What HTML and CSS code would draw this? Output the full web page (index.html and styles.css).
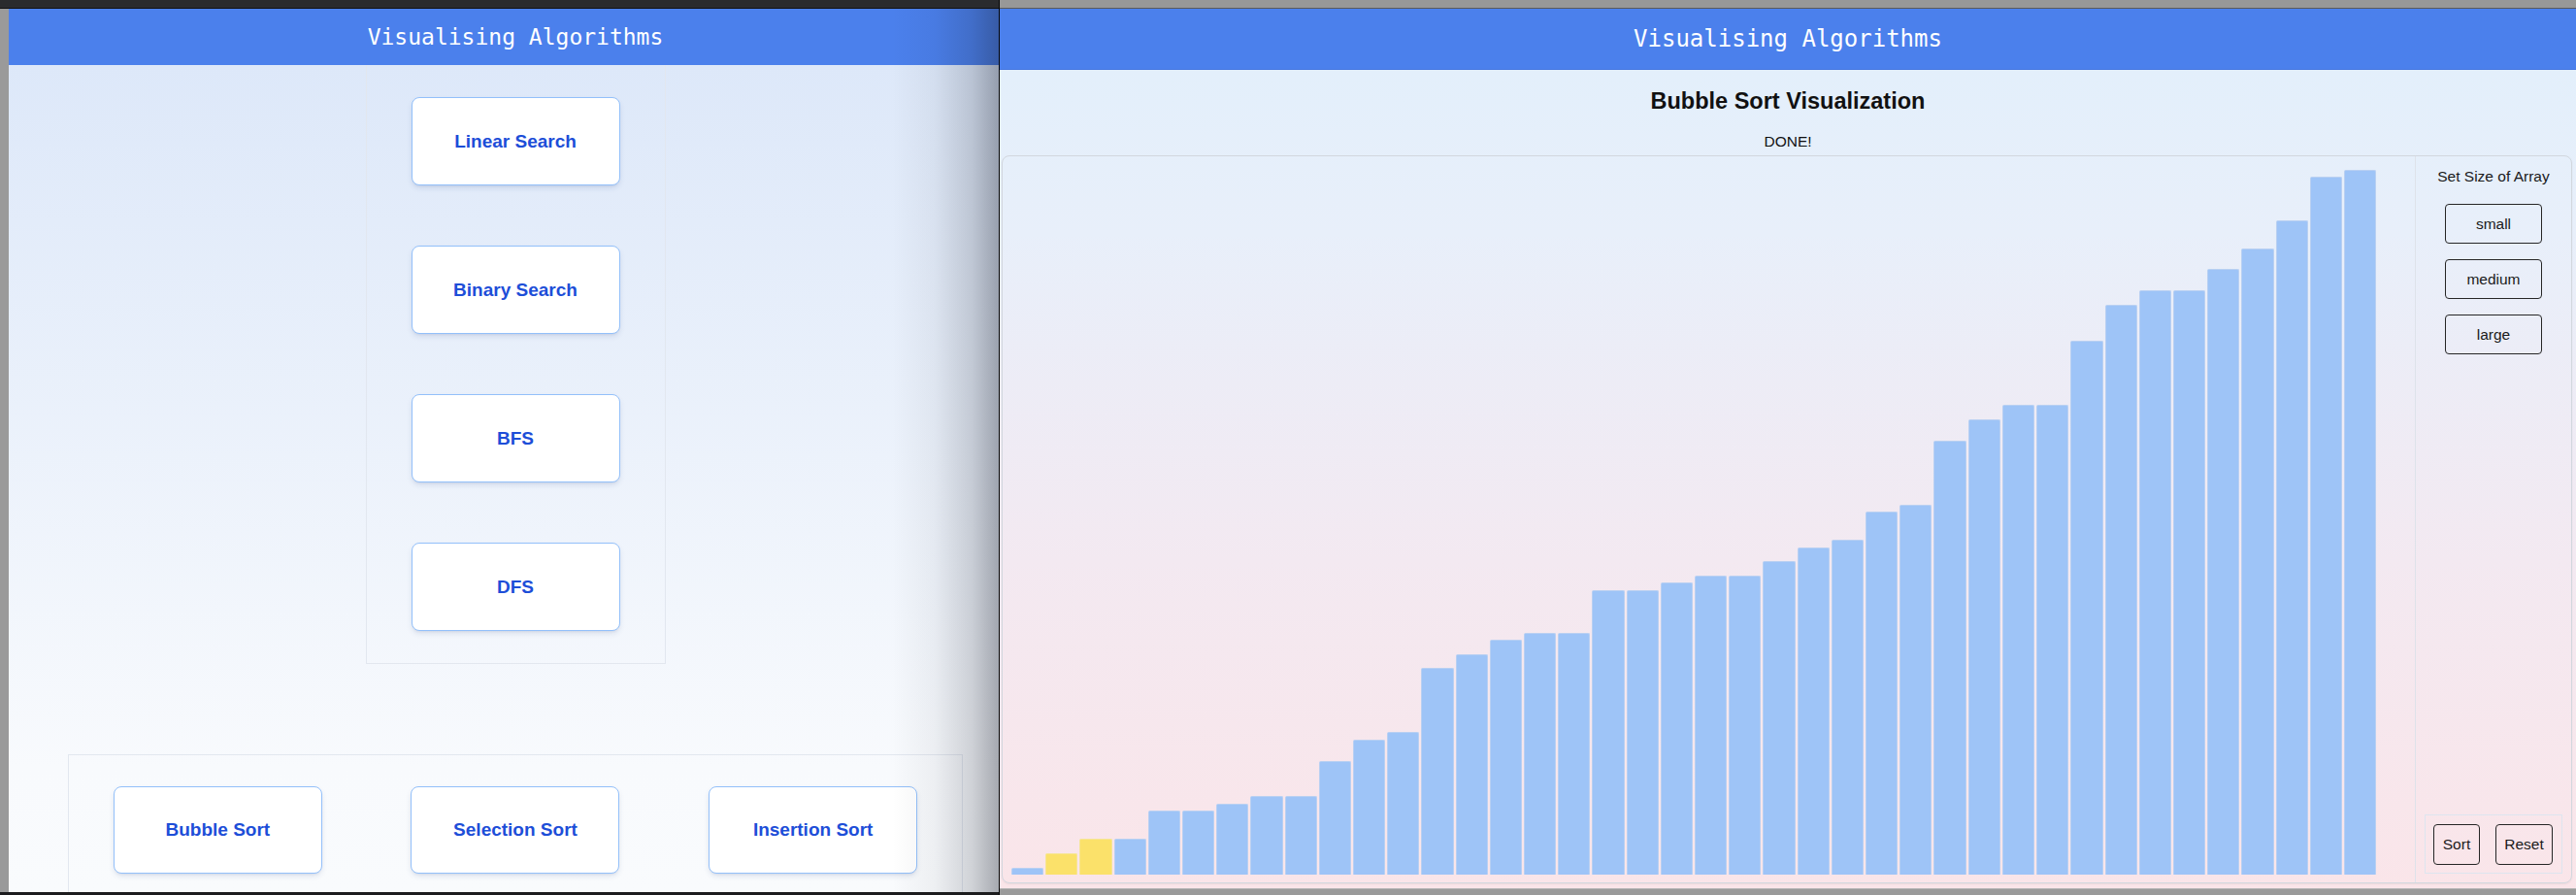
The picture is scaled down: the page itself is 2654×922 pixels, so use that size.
FILE: index.html
```html
<!DOCTYPE html>
<html lang="en">
<head>
<meta charset="utf-8">
<title>Visualising Algorithms</title>
<link rel="stylesheet" href="styles.css">
</head>
<body>
<div class="screen">
  <div class="win-left">
    <div class="topbar-dark"></div>
    <div class="left-body">
      <div class="edge-strip"></div>
      <div class="app-left">
        <header class="hdr hdr-left">Visualising Algorithms</header>
        <main class="menu">
          <div class="col-panel">
            <button class="algo-btn">Linear Search</button>
            <button class="algo-btn">Binary Search</button>
            <button class="algo-btn">BFS</button>
            <button class="algo-btn">DFS</button>
          </div>
          <div class="row-panel">
            <button class="algo-btn row-btn">Bubble Sort</button>
            <button class="algo-btn row-btn">Selection Sort</button>
            <button class="algo-btn row-btn">Insertion Sort</button>
          </div>
        </main>
      </div>
    </div>
    <div class="bottom-dark"></div>
    <div class="shade"></div>
  </div>
  <div class="win-right">
    <div class="topbar-grey"></div>
    <header class="hdr hdr-right">Visualising Algorithms</header>
    <div class="viz">
      <h2 class="viz-title">Bubble Sort Visualization</h2>
      <div class="status">DONE!</div>
      <div class="chart-panel">
        <div class="bars">
          <div class="bar" style="height:7px"></div>
          <div class="bar hl" style="height:22px"></div>
          <div class="bar hl" style="height:37px"></div>
          <div class="bar" style="height:37px"></div>
          <div class="bar" style="height:66px"></div>
          <div class="bar" style="height:66px"></div>
          <div class="bar" style="height:73px"></div>
          <div class="bar" style="height:81px"></div>
          <div class="bar" style="height:81px"></div>
          <div class="bar" style="height:117px"></div>
          <div class="bar" style="height:139px"></div>
          <div class="bar" style="height:147px"></div>
          <div class="bar" style="height:213px"></div>
          <div class="bar" style="height:227px"></div>
          <div class="bar" style="height:242px"></div>
          <div class="bar" style="height:249px"></div>
          <div class="bar" style="height:249px"></div>
          <div class="bar" style="height:293px"></div>
          <div class="bar" style="height:293px"></div>
          <div class="bar" style="height:301px"></div>
          <div class="bar" style="height:308px"></div>
          <div class="bar" style="height:308px"></div>
          <div class="bar" style="height:323px"></div>
          <div class="bar" style="height:337px"></div>
          <div class="bar" style="height:345px"></div>
          <div class="bar" style="height:374px"></div>
          <div class="bar" style="height:381px"></div>
          <div class="bar" style="height:447px"></div>
          <div class="bar" style="height:469px"></div>
          <div class="bar" style="height:484px"></div>
          <div class="bar" style="height:484px"></div>
          <div class="bar" style="height:550px"></div>
          <div class="bar" style="height:587px"></div>
          <div class="bar" style="height:602px"></div>
          <div class="bar" style="height:602px"></div>
          <div class="bar" style="height:624px"></div>
          <div class="bar" style="height:645px"></div>
          <div class="bar" style="height:674px"></div>
          <div class="bar" style="height:719px"></div>
          <div class="bar" style="height:726px"></div>
        </div>
        <aside class="controls">
          <div class="controls-top">
            <div class="ctl-label">Set Size of Array</div>
            <div class="size-list">
              <button class="ctl-btn size-btn">small</button>
              <button class="ctl-btn size-btn">medium</button>
              <button class="ctl-btn size-btn">large</button>
            </div>
          </div>
          <div class="action-box">
            <button class="ctl-btn sort-btn">Sort</button>
            <button class="ctl-btn reset-btn">Reset</button>
          </div>
        </aside>
      </div>
    </div>
    <div class="bottombar-grey"></div>
  </div>
</div>
</body>
</html>
```

FILE: styles.css
```css
* { box-sizing: border-box; }

html, body {
  margin: 0;
  padding: 0;
}

body {
  width: 2654px;
  height: 922px;
  overflow: hidden;
  background: #9a9a9a;
  font-family: "Liberation Sans", Arial, sans-serif;
}

.screen {
  display: flex;
  width: 2654px;
  height: 922px;
}

/* ---------- left window ---------- */
.win-left {
  position: relative;
  width: 1029px;
  height: 922px;
  flex: none;
  overflow: hidden;
  display: flex;
  flex-direction: column;
}

.topbar-dark {
  height: 9px;
  flex: none;
  background: #2a2b2e;
  border-bottom: 1px solid #111;
}

.left-body {
  flex: 1;
  display: flex;
  min-height: 0;
}

.edge-strip {
  width: 9px;
  flex: none;
  background: #9a9a9a;
}

.app-left {
  width: 1044px;
  flex: none;
  display: flex;
  flex-direction: column;
}

.hdr {
  flex: none;
  background: #4b80ec;
  color: #ffffff;
  font-family: "DejaVu Sans Mono", monospace;
  display: flex;
  align-items: center;
  justify-content: center;
}

.hdr-left {
  height: 58px;
  font-size: 23px;
}

.menu {
  flex: 1;
  background: linear-gradient(to bottom, #dde8f9 0%, #f8fafd 85%, #f9fbfd 100%);
  display: flex;
  flex-direction: column;
  align-items: center;
}

.col-panel {
  width: 309px;
  height: 617px;
  border: 1px solid #e2e7ef;
  border-top: none;
  padding-top: 33px;
  display: flex;
  flex-direction: column;
  align-items: center;
  gap: 62px;
}

.algo-btn {
  width: 215px;
  height: 91px;
  flex: none;
  background: #ffffff;
  border: 1.5px solid #93c0fa;
  border-radius: 8px;
  box-shadow: 0 3px 6px -1px rgba(30, 60, 120, 0.14), 0 2px 3px -2px rgba(30, 60, 120, 0.12);
  color: #1d4ed8;
  font-family: "Liberation Sans", Arial, sans-serif;
  font-weight: bold;
  font-size: 19px;
  padding: 0;
}

.row-panel {
  margin-top: 93px;
  width: 922px;
  flex: 1;
  border: 1px solid #e2e7ef;
  border-bottom: none;
  padding-top: 32px;
  display: flex;
  justify-content: space-around;
  align-items: flex-start;
}

.row-btn {
  height: 90px;
}

.bottom-dark {
  height: 3px;
  flex: none;
  background: #1c1c1e;
}

.shade {
  position: absolute;
  top: 9px;
  right: 0;
  bottom: 3px;
  width: 110px;
  pointer-events: none;
  background: linear-gradient(to right, rgba(20, 25, 40, 0) 0%, rgba(20, 25, 40, 0.05) 40%, rgba(20, 25, 40, 0.18) 75%, rgba(20, 25, 40, 0.36) 100%);
}

/* ---------- right window ---------- */
.win-right {
  flex: 1;
  height: 922px;
  border-left: 1px solid #050505;
  display: flex;
  flex-direction: column;
}

.topbar-grey {
  height: 9px;
  flex: none;
  background: #989898;
  border-bottom: 1px solid #5a5a5a;
}

.hdr-right {
  height: 63px;
  font-size: 24px;
  border-bottom: 1px solid #4476e0;
}

.viz {
  flex: 1;
  background: linear-gradient(to bottom, #e3effb 0%, #e8effa 20%, #f3e9f1 60%, #fae5e9 100%);
  display: flex;
  flex-direction: column;
  align-items: stretch;
  padding-top: 18px;
}

.viz-title {
  margin: 0;
  height: 28px;
  line-height: 28px;
  text-align: center;
  font-size: 23.5px;
  font-weight: bold;
  color: #111;
}

.status {
  margin-top: 19px;
  height: 18px;
  line-height: 18px;
  text-align: center;
  font-size: 15.5px;
  color: #111;
}

.chart-panel {
  margin: 5px 4px 5px 2px;
  height: 750px;
  border: 1px solid #d2d7de;
  border-radius: 8px;
  box-shadow: 0 1px 2px rgba(0, 0, 0, 0.06);
  display: flex;
}

.bars {
  flex: 1;
  display: flex;
  align-items: flex-end;
  gap: 2px;
  padding: 0 40px 8px 9px;
}

.bar {
  flex: 1;
  background: #9ec4f7;
  border: 1px solid #b9d0f2;
  border-bottom: none;
  border-radius: 2px 2px 0 0;
}

.bar.hl {
  background: #fbe16a;
  border-color: #f6e597;
}

.controls {
  width: 161px;
  flex: none;
  border-left: 1px solid #dde2ea;
  display: flex;
  flex-direction: column;
  justify-content: space-between;
  align-items: center;
  padding: 12px 0 9px;
}

.controls-top {
  display: flex;
  flex-direction: column;
  align-items: center;
}

.ctl-label {
  height: 18px;
  line-height: 18px;
  font-size: 15.5px;
  color: #1a1a1a;
}

.size-list {
  margin-top: 19px;
  display: flex;
  flex-direction: column;
  gap: 16px;
}

.ctl-btn {
  background: transparent;
  border: 1.5px solid #262626;
  border-radius: 4px;
  font-family: "Liberation Sans", Arial, sans-serif;
  font-size: 15.5px;
  color: #1a1a1a;
  padding: 0;
}

.size-btn {
  width: 100px;
  height: 41px;
}

.action-box {
  width: 142px;
  height: 61px;
  border: 1px solid #dde5ef;
  display: flex;
  align-items: center;
  gap: 16px;
  padding: 0 9px 0 8px;
}

.sort-btn {
  width: 48px;
  height: 42px;
}

.reset-btn {
  width: 59px;
  height: 42px;
}

.bottombar-grey {
  height: 7px;
  flex: none;
  background: #9a9a9a;
  border-top: 1px solid #b5b5b5;
}
```
